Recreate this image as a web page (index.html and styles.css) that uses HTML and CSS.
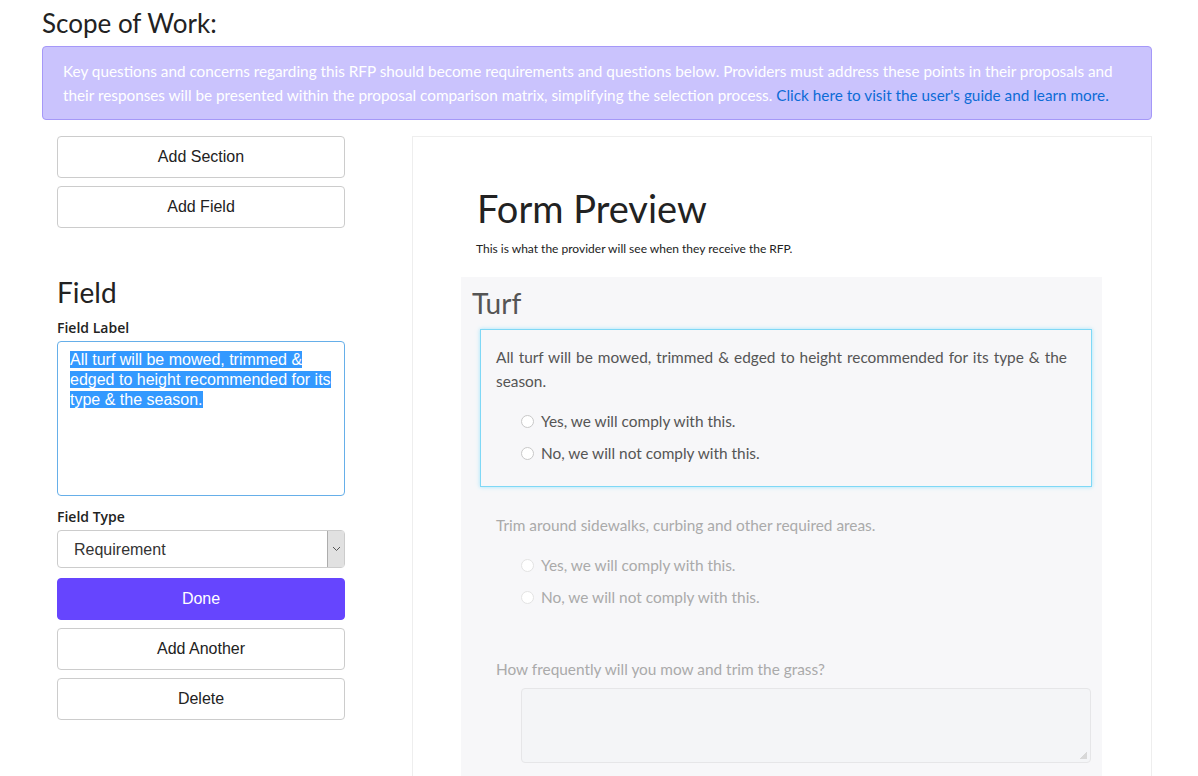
FILE: index.html
```html
<!DOCTYPE html>
<html lang="en">
<head>
    <meta charset="UTF-8">
    <meta name="viewport" content="width=device-width, initial-scale=1.0">
    <title>Scope of Work</title>
    <link rel="stylesheet" href="styles.css">
</head>
<body>
    <div class="page">
        <h2 class="page-title">Scope of Work:</h2>
        <div class="alert">
            <span>Key questions and concerns regarding this RFP should become requirements and questions below. Providers must address these points in their proposals and their responses will be presented within the proposal comparison matrix, simplifying the selection process.</span> <a href="#">Click here to visit the user's guide and learn more.</a>
        </div>

        <div class="row">
            <div class="sidebar">
                <button class="btn">Add Section</button>
                <button class="btn">Add Field</button>

                <h3 class="field-title">Field</h3>
                <label class="lbl">Field Label</label>
                <div class="label-input"><span class="sel">All turf will be mowed, trimmed &amp; </span><br><span class="sel">edged to height recommended for its </span><br><span class="sel">type &amp; the season.</span></div>

                <label class="lbl type-lbl">Field Type</label>
                <div class="select">
                    <span class="select-text">Requirement</span>
                    <span class="select-arrow">
                        <svg width="9" height="6" viewBox="0 0 9 6"><path d="M1 1 L4.5 4.5 L8 1" fill="none" stroke="#555" stroke-width="1"/></svg>
                    </span>
                </div>

                <button class="btn btn-done">Done</button>
                <button class="btn">Add Another</button>
                <button class="btn">Delete</button>
            </div>

            <div class="preview">
                <h1 class="preview-title">Form Preview</h1>
                <p class="preview-sub">This is what the provider will see when they receive the RFP.</p>

                <div class="section">
                    <h3 class="section-title">Turf</h3>

                    <div class="item active">
                        <p class="item-text">All turf will be mowed, trimmed &amp; edged to height recommended for its type &amp; the season.</p>
                        <div class="radio"><span class="dot"></span>Yes, we will comply with this.</div>
                        <div class="radio"><span class="dot"></span>No, we will not comply with this.</div>
                    </div>

                    <div class="item faded">
                        <p class="item-text">Trim around sidewalks, curbing and other required areas.</p>
                        <div class="radio"><span class="dot"></span>Yes, we will comply with this.</div>
                        <div class="radio"><span class="dot"></span>No, we will not comply with this.</div>
                    </div>

                    <div class="item faded">
                        <p class="item-text">How frequently will you mow and trim the grass?</p>
                        <div class="answer-box"><span class="grip"></span></div>
                    </div>
                </div>
            </div>
        </div>
    </div>
</body>
</html>
```

FILE: styles.css
```css
* {
    margin: 0;
    padding: 0;
    box-sizing: border-box;
}
body {
    font-family: "Lato", "Open Sans", sans-serif;
    color: #333;
    background: #fff;
    overflow: hidden;
}
.page {
    padding: 8px 46px 0 42px;
}
.page-title {
    font-size: 26px;
    font-weight: 400;
    line-height: 30px;
    color: #222;
}
.alert {
    margin-top: 8px;
    background: #cac3fd;
    border: 1px solid #a598f8;
    border-radius: 4px;
    padding: 12px 20px;
    color: #fff;
    font-size: 15.3px;
    line-height: 24px;
}
.alert a {
    color: #0c6bd6;
    text-decoration: none;
}
.row {
    display: flex;
    margin-top: 16px;
}
.sidebar {
    width: 288px;
    margin-left: 15px;
    display: flex;
    flex-direction: column;
}
.btn {
    height: 42px;
    width: 100%;
    background: #fff;
    border: 1px solid #ccc;
    border-radius: 4px;
    font-family: "Liberation Sans", Arial, sans-serif;
    font-size: 16px;
    color: #222;
    margin-bottom: 8px;
}
.btn-done {
    margin-top: 10px;
    background: #6645fe;
    border-color: #6645fe;
    color: #fff;
}
.field-title {
    font-size: 28px;
    font-weight: 400;
    line-height: 32px;
    margin-top: 40px;
    color: #222;
}
.lbl {
    display: block;
    font-family: "Open Sans", "Lato", sans-serif;
    font-size: 14px;
    font-weight: 600;
    line-height: 20px;
    margin-top: 10px;
    margin-bottom: 3px;
    color: #222;
}
.type-lbl {
    margin-top: 11px;
}
.label-input {
    height: 155px;
    border: 1px solid #66afe9;
    border-radius: 4px;
    padding: 8px 12px;
    font-family: "Liberation Sans", Arial, sans-serif;
    font-size: 16px;
    line-height: 20px;
    color: #fff;
}
.sel {
    background: #3399ff;
}
.select {
    height: 38px;
    border: 1px solid #ccc;
    border-radius: 4px;
    display: flex;
    align-items: stretch;
    font-family: "Liberation Sans", Arial, sans-serif;
    font-size: 16px;
    color: #333;
}
.select-text {
    flex: 1;
    padding: 2px 0 0 16px;
    display: flex;
    align-items: center;
}
.select-arrow {
    width: 17px;
    background: #e1e1e1;
    border-left: 1px solid #adadad;
    display: flex;
    align-items: center;
    justify-content: center;
}
.preview {
    margin-left: 67px;
    flex: 1;
    border: 1px solid #eee;
    border-bottom: none;
    padding: 47px 49px 0 48px;
    min-height: 660px;
}
.preview-title {
    font-size: 38px;
    font-weight: 400;
    line-height: 48px;
    color: #222;
    padding-left: 16px;
}
.preview-sub {
    font-size: 12px;
    line-height: 20px;
    margin-top: 7px;
    padding-left: 15px;
    color: #222;
}
.section {
    background: #f7f7f9;
    margin-top: 18px;
    padding: 9px 10px 40px 19px;
    min-height: 520px;
}
.section-title {
    font-size: 28px;
    font-weight: 400;
    line-height: 34px;
    color: #555;
    margin-left: -8px;
    margin-bottom: 9px;
}
.item {
    border: 1px solid transparent;
    padding: 15px 0 17px 15px;
    margin-bottom: 10px;
    color: #555;
    font-size: 15.4px;
}
.item.active {
    border-color: #7fd8f6;
    box-shadow: 0 0 4px rgba(102, 217, 255, 0.6);
}
.item.faded {
    color: #aaa;
}
.item-text {
    line-height: 24px;
    text-align: justify;
    padding-right: 24px;
}
.radio {
    display: flex;
    align-items: center;
    height: 32px;
    padding-left: 25px;
}
.item-text + .radio {
    margin-top: 12px;
}
.dot {
    width: 13px;
    height: 13px;
    border: 1px solid #c8c8c8;
    border-radius: 50%;
    background: #fff;
    margin-right: 7px;
}
.faded .dot {
    border-color: #e3e3e3;
}
.answer-box {
    margin: 7px 0 0 25px;
    height: 75px;
    border: 1px solid #e6e6e8;
    border-radius: 4px;
    background: #f4f5f7;
    position: relative;
}
.grip {
    position: absolute;
    right: 3px;
    bottom: 3px;
    width: 7px;
    height: 7px;
    background: linear-gradient(135deg, transparent 50%, #d8d8d8 50%);
}
```
